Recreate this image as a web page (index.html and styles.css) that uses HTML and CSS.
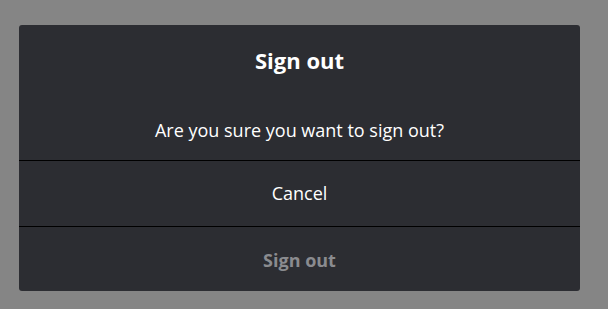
FILE: index.html
```html
<!DOCTYPE html>
<html lang="en">
<head>
    <meta charset="UTF-8">
    <meta name="viewport" content="width=device-width, initial-scale=1.0">
    <title>Sign out</title>
    <link rel="stylesheet" href="styles.css">
</head>
<body>
    <div class="overlay">
        <div class="dialog">
            <div class="dialog-body">
                <h2 class="dialog-title">Sign out</h2>
                <p class="dialog-message">Are you sure you want to sign out?</p>
            </div>
            <button type="button" class="dialog-btn">Cancel</button>
            <button type="button" class="dialog-btn dialog-btn-confirm">Sign out</button>
        </div>
    </div>
</body>
</html>
```

FILE: styles.css
```css
* {
    margin: 0;
    padding: 0;
    box-sizing: border-box;
}

body {
    font-family: 'Open Sans', 'Noto Sans', sans-serif;
    background: #858585;
    width: 608px;
    height: 309px;
    overflow: hidden;
}

.overlay {
    padding: 25px 28px 0 19px;
}

.dialog {
    width: 561px;
    background: #2c2d32;
    border-radius: 3px;
    display: flex;
    flex-direction: column;
    overflow: hidden;
}

.dialog-body {
    height: 135px;
    display: flex;
    flex-direction: column;
    align-items: center;
    color: #ffffff;
}

.dialog-title {
    font-size: 22px;
    font-weight: 700;
    line-height: 28px;
    margin-top: 21px;
}

.dialog-message {
    font-size: 18px;
    line-height: 24px;
    margin-top: 44px;
}

.dialog-btn {
    height: 66px;
    border: none;
    border-top: 1px solid #000000;
    background: transparent;
    color: #ffffff;
    font-family: inherit;
    font-size: 18px;
    cursor: pointer;
    padding-bottom: 1px;
}

.dialog-btn-confirm {
    color: #8a8b8f;
    font-weight: 700;
    height: 65px;
    padding-top: 2px;
}
```
